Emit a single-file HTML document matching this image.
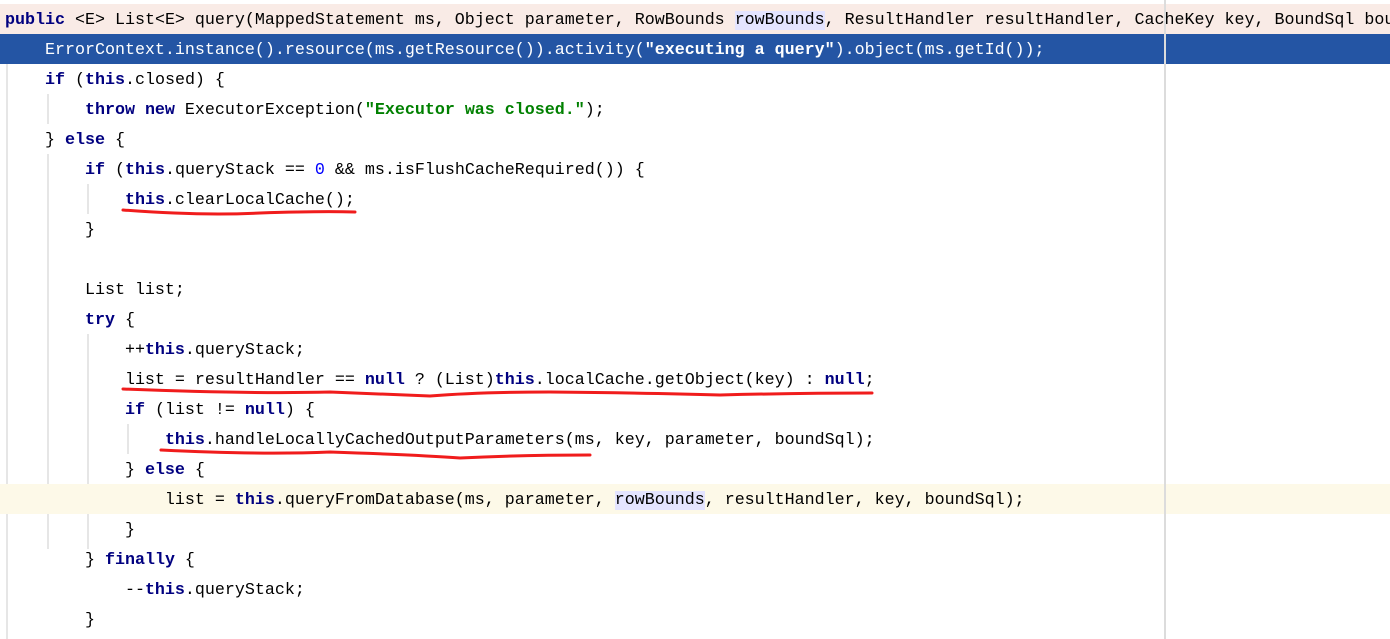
<!DOCTYPE html>
<html><head><meta charset="utf-8"><style>
html,body{margin:0;padding:0;background:#fff;width:1390px;height:639px;overflow:hidden;position:relative}
.l{position:absolute;left:0;width:1390px;height:30px;line-height:30px;font-family:"Liberation Mono",monospace;font-size:16.67px;color:#000;white-space:pre;overflow:hidden}
.t{position:absolute;left:5px;top:2px}
.k{color:#000080;font-weight:bold}
.s{color:#008000;font-weight:bold}
.n{color:#0000ff}
.h{background:#e4e4ff}
.sel{background:#2455a4;color:#fff}
.sel .k,.sel .s{color:#fff}
.g{position:absolute;width:2px;background:#e6e6e6}
</style></head><body>
<div class="g" style="left:6px;top:64px;height:575px"></div>
<div class="g" style="left:47px;top:94px;height:30px"></div>
<div class="g" style="left:47px;top:154px;height:395px"></div>
<div class="g" style="left:87px;top:184px;height:30px"></div>
<div class="g" style="left:87px;top:334px;height:215px"></div>
<div class="g" style="left:127px;top:424px;height:30px"></div>
<div class="g" style="left:127px;top:484px;height:30px"></div>
<div class="l" style="top:4px;background:#f9ebe6"><span class="t"><span class="k">public</span> &lt;E&gt; List&lt;E&gt; query(MappedStatement ms, Object parameter, RowBounds <span class="h">rowBounds</span>, ResultHandler resultHandler, CacheKey key, BoundSql boundSql) {</span></div>
<div class="l sel" style="top:34px"><span class="t">    ErrorContext.instance().resource(ms.getResource()).activity(<span class="s">"executing a query"</span>).object(ms.getId());</span></div>
<div class="l" style="top:64px"><span class="t">    <span class="k">if</span> (<span class="k">this</span>.closed) {</span></div>
<div class="l" style="top:94px"><span class="t">        <span class="k">throw new</span> ExecutorException(<span class="s">"Executor was closed."</span>);</span></div>
<div class="l" style="top:124px"><span class="t">    } <span class="k">else</span> {</span></div>
<div class="l" style="top:154px"><span class="t">        <span class="k">if</span> (<span class="k">this</span>.queryStack == <span class="n">0</span> &amp;&amp; ms.isFlushCacheRequired()) {</span></div>
<div class="l" style="top:184px"><span class="t">            <span class="k">this</span>.clearLocalCache();</span></div>
<div class="l" style="top:214px"><span class="t">        }</span></div>
<div class="l" style="top:274px"><span class="t">        List list;</span></div>
<div class="l" style="top:304px"><span class="t">        <span class="k">try</span> {</span></div>
<div class="l" style="top:334px"><span class="t">            ++<span class="k">this</span>.queryStack;</span></div>
<div class="l" style="top:364px"><span class="t">            list = resultHandler == <span class="k">null</span> ? (List)<span class="k">this</span>.localCache.getObject(key) : <span class="k">null</span>;</span></div>
<div class="l" style="top:394px"><span class="t">            <span class="k">if</span> (list != <span class="k">null</span>) {</span></div>
<div class="l" style="top:424px"><span class="t">                <span class="k">this</span>.handleLocallyCachedOutputParameters(ms, key, parameter, boundSql);</span></div>
<div class="l" style="top:454px"><span class="t">            } <span class="k">else</span> {</span></div>
<div class="l" style="top:484px;background:#fdf9e8"><span class="t">                list = <span class="k">this</span>.queryFromDatabase(ms, parameter, <span class="h">rowBounds</span>, resultHandler, key, boundSql);</span></div>
<div class="l" style="top:514px"><span class="t">            }</span></div>
<div class="l" style="top:544px"><span class="t">        } <span class="k">finally</span> {</span></div>
<div class="l" style="top:574px"><span class="t">            --<span class="k">this</span>.queryStack;</span></div>
<div class="l" style="top:604px"><span class="t">        }</span></div>
<div class="g" style="left:1164px;top:0;height:639px;background:#dcdcdc"></div>
<svg style="position:absolute;left:0;top:0" width="1390" height="639">
<g fill="none" stroke="#f01c1c" stroke-width="3" stroke-linecap="round">
<path d="M123 210 Q200 216 260 213 Q320 211 355 212"/>
<path d="M123 389 Q250 394 330 392 Q380 394 430 396 Q480 392 550 392 Q650 393 720 395 Q800 393 872 393"/>
<path d="M161 450 Q260 455 330 452 Q420 455 460 458 Q520 455 590 455"/>
</g></svg>
</body></html>
